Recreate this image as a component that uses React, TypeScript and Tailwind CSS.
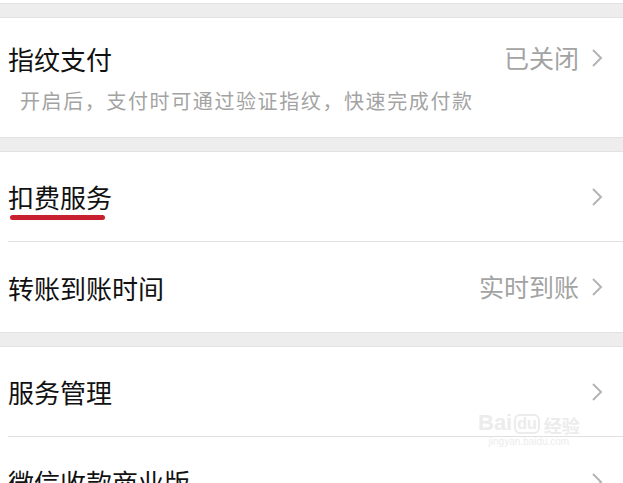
import { FC, ReactNode } from "react";

const Chevron: FC = () => (
     <svg width="14" height="22" viewBox="0 0 14 22" className="shrink-0">
          <path d="M3 3 L11 11 L3 19" fill="none" stroke="#b4b4b4" strokeWidth="2" />
     </svg>
);

const Gap: FC = () => <div className="h-[15px] bg-[#ededed] border-y border-[#e2e2e2]" />;

interface RowProps {
     title: ReactNode;
     value?: string;
     height?: string;
     divider?: boolean;
}

const Row: FC<RowProps> = ({ title, value, height = "h-[89px]", divider }) => (
     <div className="bg-white">
          <div className={`flex items-center justify-between pl-[8px] pr-[19px] ${height}`}>
               <div className="text-[26px] text-[#111]">{title}</div>
               <div className="flex items-center gap-[11px]">
                    {value && <span className="text-[25px] text-[#a3a3a3]">{value}</span>}
                    <Chevron />
               </div>
          </div>
          {divider && <div className="ml-[8px] h-px bg-[#e0e0e0]" />}
     </div>
);

const App: FC = () => {
     return (
          <div
               className="relative w-[623px] h-[483px] overflow-hidden bg-white"
               style={{ fontFamily: '"Noto Sans CJK SC", "Noto Sans", sans-serif' }}>
               <div className="h-[3px] bg-white" />
               <Gap />

               {/* 指纹支付 */}
               <div className="bg-white h-[119px] pl-[8px] pr-[19px] pt-[22px]">
                    <div className="flex items-center justify-between h-[36px]">
                         <div className="text-[26px] text-[#111]">指纹支付</div>
                         <div className="flex items-center gap-[11px]">
                              <span className="text-[25px] text-[#a3a3a3]">已关闭</span>
                              <Chevron />
                         </div>
                    </div>
                    <div className="mt-[10px] pl-[12px] text-[20px] text-[#a3a3a3] tracking-[1.6px]">
                         开启后，支付时可通过验证指纹，快速完成付款
                    </div>
               </div>

               <Gap />

               <Row
                    divider
                    title={
                         <div className="relative">
                              扣费服务
                              <div className="absolute left-[2px] top-[38px] w-[95px] h-[5px] rounded-full bg-[#c8202f]" />
                         </div>
                    }
               />
               <Row title="转账到账时间" value="实时到账" height="h-[90px]" />

               <Gap />

               <Row title="服务管理" divider />
               <Row title="微信收款商业版" />

               {/* watermark */}
               <div className="absolute left-[478px] top-[412px] flex flex-col items-center text-[#ececec] select-none">
                    <div className="flex items-end text-[22px] font-bold leading-none" style={{ fontFamily: '"Liberation Sans", sans-serif' }}>
                         <span>Bai</span>
                         <span className="ml-[2px] text-[16px] border-2 border-[#ececec] rounded-[6px] px-[1px]">du</span>
                         <span className="ml-[4px] text-[18px]" style={{ fontFamily: '"Noto Sans CJK SC", sans-serif' }}>经验</span>
                    </div>
                    <div className="text-[10px] leading-none mt-[3px]" style={{ fontFamily: '"Liberation Sans", sans-serif' }}>
                         jingyan.baidu.com
                    </div>
               </div>
          </div>
     );
};

export default App;
